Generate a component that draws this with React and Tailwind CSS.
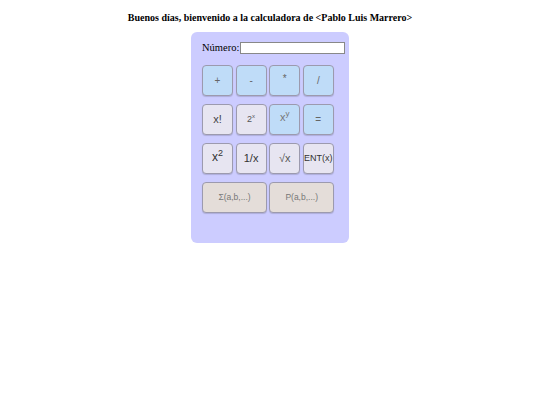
const btnBase =
    "flex items-center justify-center h-[31px] rounded-[4px] border border-[#9c9aae] shadow-[0_1px_1px_rgba(0,0,0,0.15)] font-['Liberation_Sans',Arial,sans-serif]";

const Key = ({ kind, className = "", children }) => {
    const colors = {
        op: "bg-[#bfdcf8] text-[#666]",
        fn: "bg-[#e7e5f1] text-[#333]",
        agg: "bg-[#e4ddd9] text-[#777]"
    };
    return (
        <button className={`${btnBase} ${colors[kind]} ${className}`}>
            {children}
        </button>
    );
};

const App = () => {
    return (
        <div className="w-[540px] h-[405px] bg-white font-['Liberation_Serif','Times_New_Roman',serif]">
            <h1 className="pt-[11px] text-center text-[10px] font-bold text-black leading-[14px]">
                Buenos días, bienvenido a la calculadora de &lt;Pablo Luis Marrero&gt;
            </h1>

            <div className="mx-auto mt-[7px] w-[158px] h-[211px] rounded-[6px] bg-[#ccccff] pl-[11px] pt-[9px]">
                <label className="flex items-center gap-[1px] text-[10.5px] text-black h-[14px]">
                    <span>Número:</span>
                    <input type="text" className="w-[105px] h-[12px] bg-white border border-[#888]" />
                </label>

                <div className="mt-[10px] grid grid-cols-[31px_31px_31px_31px] gap-x-[2.6px] gap-y-[8px]">
                    <Key kind="op" className="text-[10px]">+</Key>
                    <Key kind="op" className="text-[10px]">-</Key>
                    <Key kind="op" className="text-[10px] pb-[4px]">*</Key>
                    <Key kind="op" className="text-[10px]">/</Key>

                    <Key kind="fn" className="text-[11px] text-[#444]">x!</Key>
                    <Key kind="fn" className="text-[9px] text-[#555]">2<sup className="text-[6px] -top-[4px]">x</sup></Key>
                    <Key kind="op" className="text-[11px] text-[#777] pb-[4px]">x<sup className="text-[8px]">y</sup></Key>
                    <Key kind="op" className="text-[10px]">=</Key>

                    <Key kind="fn" className="text-[12px] text-[#333] pb-[3px]">x<sup className="text-[9px]">2</sup></Key>
                    <Key kind="fn" className="text-[11px] text-[#333]">1/x</Key>
                    <Key kind="fn" className="text-[11px] text-[#555]">√x</Key>
                    <Key kind="fn" className="text-[9px] text-[#333]">ENT(x)</Key>

                    <Key kind="agg" className="col-span-2 text-[8.5px] w-[65px]">Σ(a,b,...)</Key>
                    <Key kind="agg" className="col-span-2 text-[8.5px] w-[65px]">P(a,b,...)</Key>
                </div>
            </div>
        </div>
    );
};

export default App;
